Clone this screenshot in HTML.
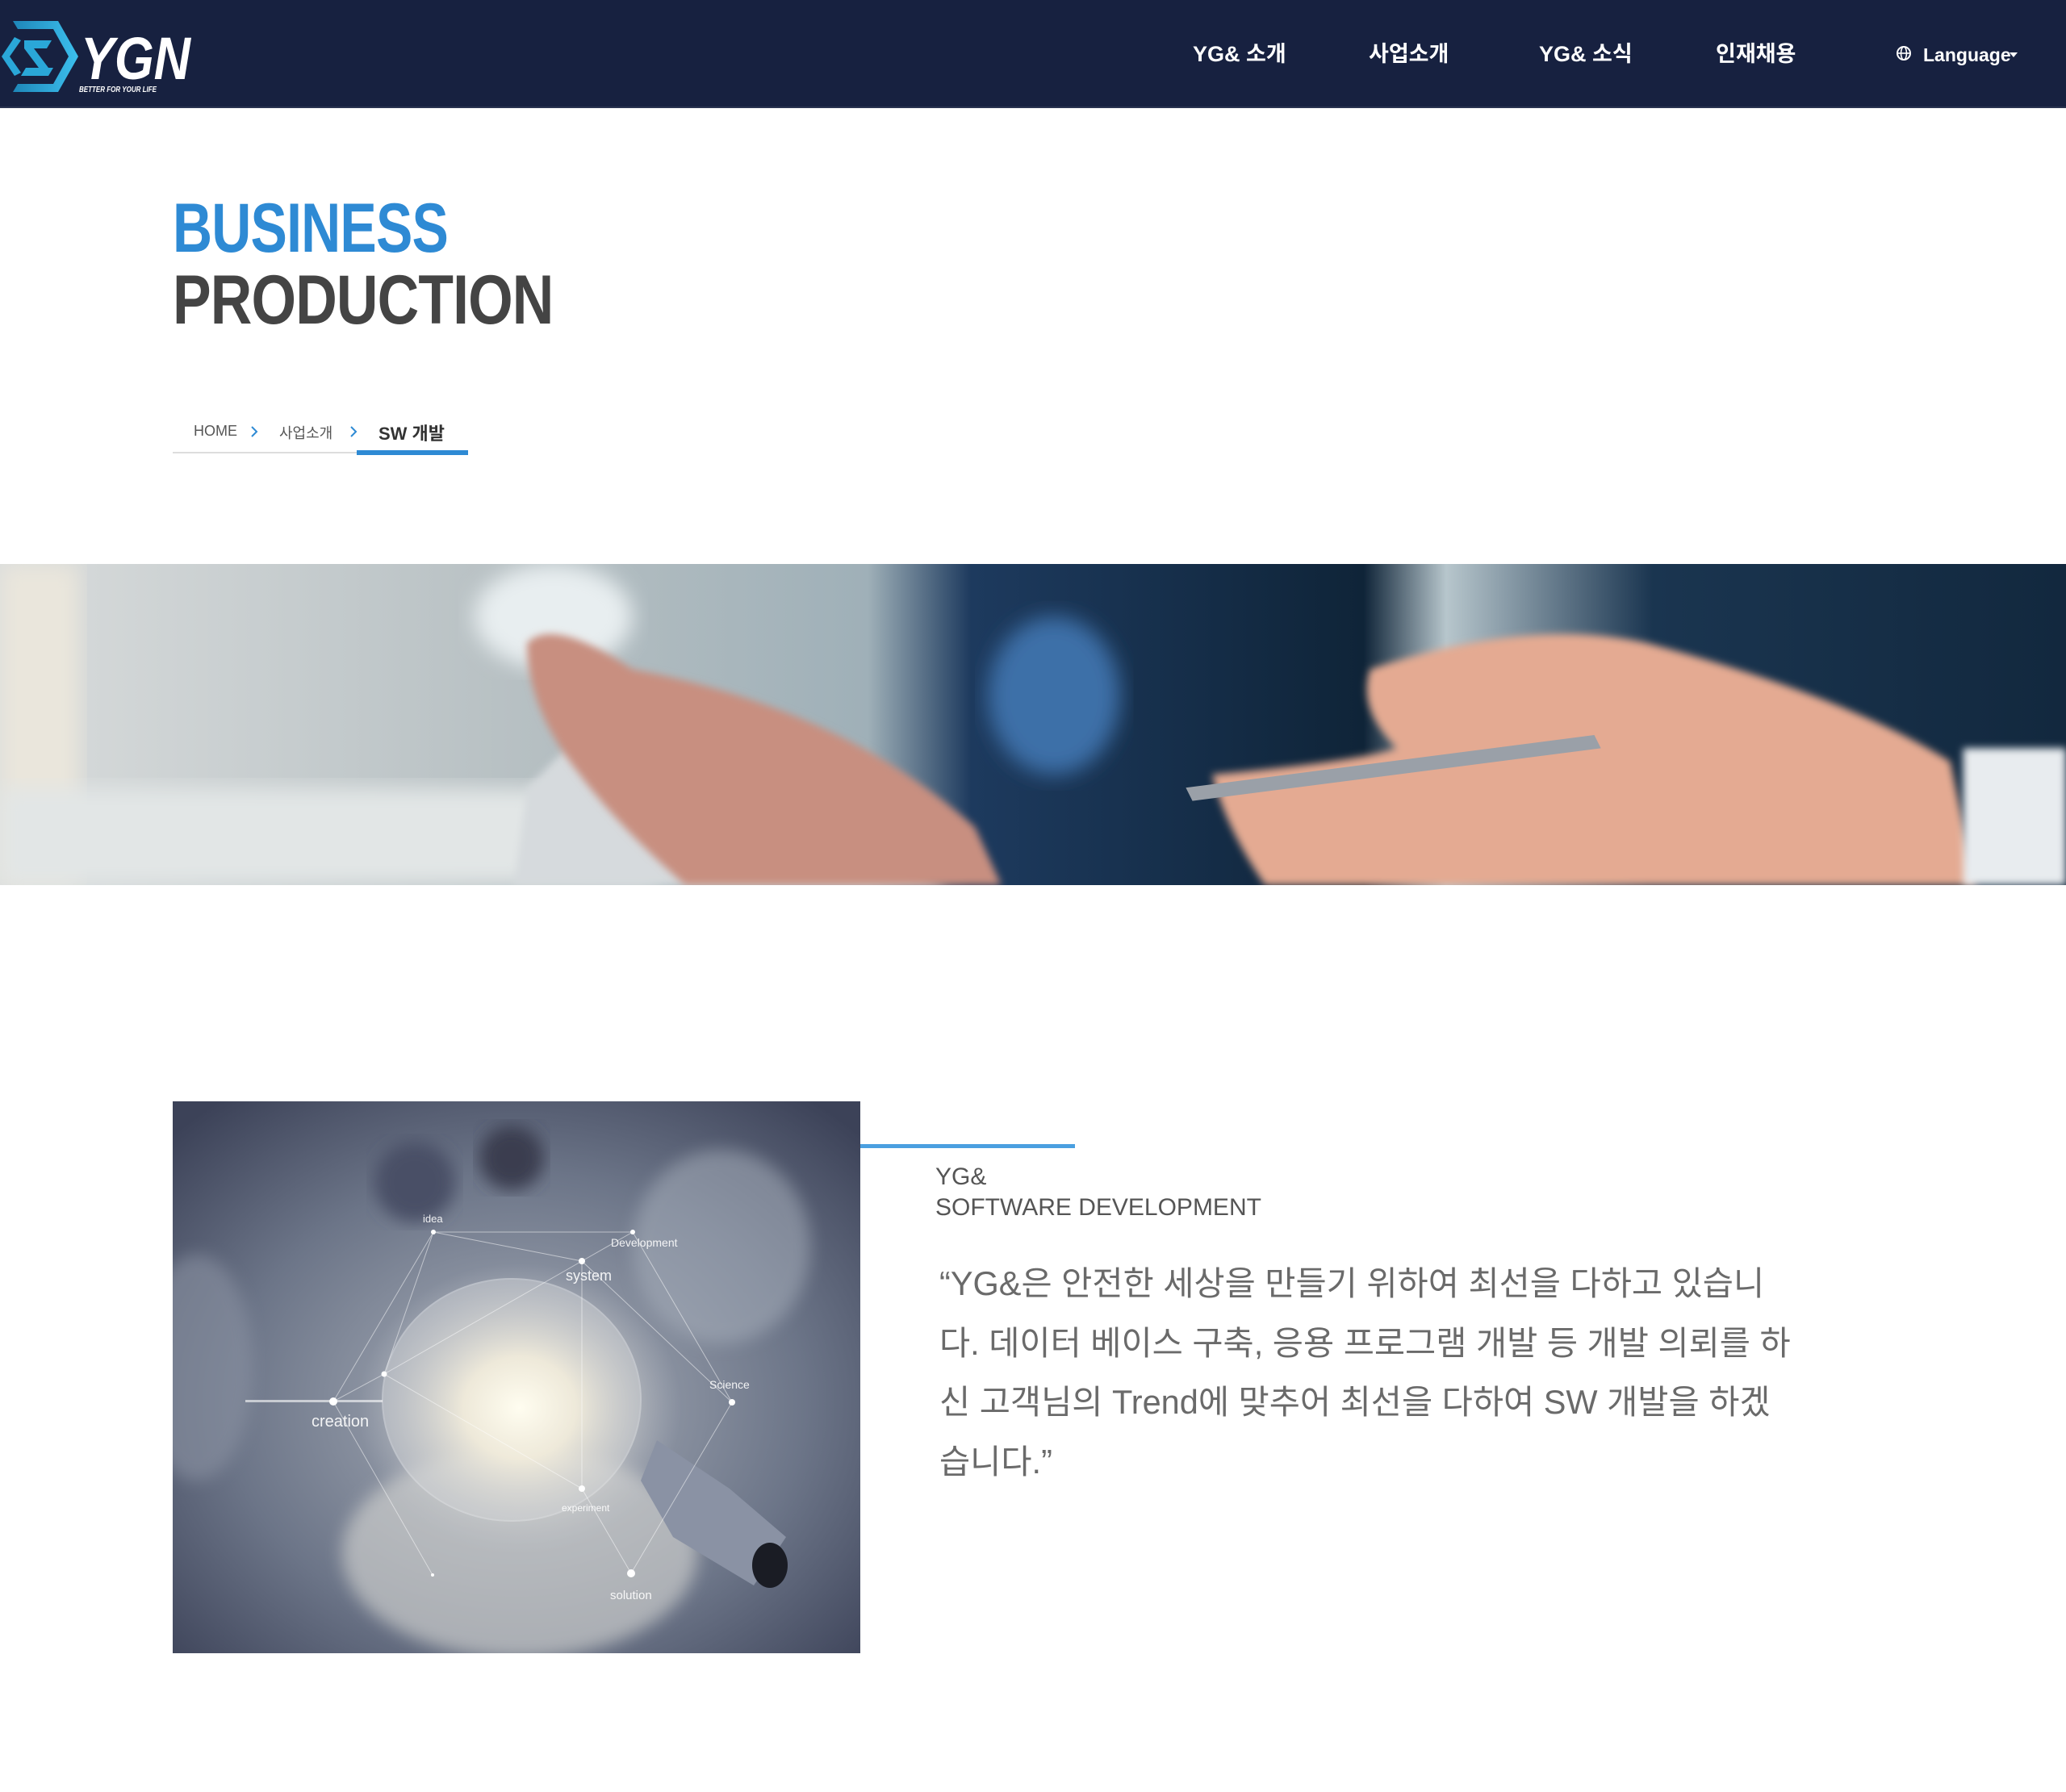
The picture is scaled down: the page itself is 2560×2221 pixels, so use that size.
<!DOCTYPE html>
<html><head><meta charset="utf-8"><style>
*{margin:0;padding:0;box-sizing:border-box}
body{width:2560px;height:2221px;background:#fff;position:relative;overflow:hidden;font-family:"Liberation Sans","Noto Sans CJK KR",sans-serif}
.hdr{position:absolute;left:0;top:0;width:2560px;height:134px;background:#172140;border-bottom:2px solid #2a3450}
.nav{position:absolute;top:50px;color:#fff;font-size:27px;font-weight:bold;white-space:nowrap;line-height:34px}
.abs{position:absolute;white-space:nowrap}
.big{position:absolute;left:214px;font-size:86px;font-weight:bold;transform-origin:left;letter-spacing:-1px;line-height:1}
</style></head><body>
<div class="hdr">
<svg style="position:absolute;left:0;top:20px" width="245" height="100" viewBox="0 0 245 100">
<defs><linearGradient id="lg" x1="0" x2="1"><stop offset="0" stop-color="#1e86b8"/><stop offset="1" stop-color="#3cc0ee"/></linearGradient></defs>
<path d="M16 6 L72 6 L97 50 L72 94 L16 94 L22 84 L66 84 L85 50 L66 16 L22 16 Z" fill="url(#lg)"/>
<path d="M18 26 L2 50 L18 74 L26 70 L12 50 L26 30 Z" fill="#2aa7d8"/>
<path d="M30 30 L64 30 L58 40 L42 40 L60 64 L66 64 L60 74 L26 74 L32 64 L48 64 L30 40 Z" fill="#2aa7d8"/>
<text x="100" y="78" font-family="Liberation Sans" font-weight="bold" font-style="italic" font-size="74" fill="#fff" textLength="136" lengthAdjust="spacingAndGlyphs">YGN</text>
<text x="98" y="94" font-family="Liberation Sans" font-weight="bold" font-style="italic" font-size="10" fill="#fff" textLength="96" lengthAdjust="spacingAndGlyphs">BETTER FOR YOUR LIFE</text>
</svg>
<div class="nav" style="left:1478px">YG&amp; 소개</div>
<div class="nav" style="left:1696px">사업소개</div>
<div class="nav" style="left:1907px">YG&amp; 소식</div>
<div class="nav" style="left:2126px">인재채용</div>
<svg style="position:absolute;left:2349px;top:56px" width="20" height="20" viewBox="0 0 20 20"><circle cx="10" cy="10" r="8" fill="none" stroke="#fff" stroke-width="2"/><ellipse cx="10" cy="10" rx="3.5" ry="8" fill="none" stroke="#fff" stroke-width="1.6"/><line x1="2" y1="10" x2="18" y2="10" stroke="#fff" stroke-width="1.6"/></svg>
<div class="nav" style="left:2383px;font-size:23px;top:51px">Language</div>
<div style="position:absolute;left:2490px;top:65px;border-left:5px solid transparent;border-right:5px solid transparent;border-top:6px solid #fff"></div>
</div>

<div class="big" style="top:240px;color:#2e8ad4;transform:scaleX(0.79)">BUSINESS</div>
<div class="big" style="top:329px;color:#444;transform:scaleX(0.83)">PRODUCTION</div>

<div class="abs" style="left:240px;top:524px;font-size:18px;color:#555">HOME</div>
<svg style="position:absolute;left:310px;top:527px" width="10" height="16" viewBox="0 0 10 16"><path d="M2 2 L8 8 L2 14" fill="none" stroke="#2e8ad4" stroke-width="2"/></svg>
<div class="abs" style="left:346px;top:523px;font-size:18px;color:#555">사업소개</div>
<svg style="position:absolute;left:433px;top:527px" width="10" height="16" viewBox="0 0 10 16"><path d="M2 2 L8 8 L2 14" fill="none" stroke="#2e8ad4" stroke-width="2"/></svg>
<div class="abs" style="left:469px;top:520px;font-size:22px;color:#333;font-weight:bold">SW 개발</div>
<div class="abs" style="left:214px;top:560px;width:228px;height:2px;background:#ddd"></div>
<div class="abs" style="left:442px;top:558px;width:138px;height:6px;background:#2e8ad4"></div>

<svg style="position:absolute;left:0;top:699px" width="2560" height="398" viewBox="0 0 1568 244" preserveAspectRatio="none">
<defs>
<linearGradient id="bg" x1="0" x2="1"><stop offset="0" stop-color="#d9dcdc"/><stop offset="0.25" stop-color="#b7c0c3"/><stop offset="0.42" stop-color="#9fb0b8"/><stop offset="0.47" stop-color="#1d3a5e"/><stop offset="0.66" stop-color="#0f2438"/><stop offset="0.7" stop-color="#b7c6cc"/><stop offset="0.8" stop-color="#1a3550"/><stop offset="1" stop-color="#12283e"/></linearGradient>
<filter id="bl"><feGaussianBlur stdDeviation="8"/></filter>
<filter id="bl2"><feGaussianBlur stdDeviation="3"/></filter>
</defs>
<rect width="1568" height="244" fill="url(#bg)"/>
<rect x="0" y="0" width="60" height="244" fill="#eae6dc" filter="url(#bl)"/>
<rect x="0" y="170" width="500" height="74" fill="#e2e6e6" filter="url(#bl)"/>
<ellipse cx="420" cy="40" rx="60" ry="40" fill="#e8eef0" filter="url(#bl)"/>
<ellipse cx="800" cy="100" rx="50" ry="60" fill="#3d6fa8" filter="url(#bl)"/>
<path d="M400 170 L430 140 L720 244 L390 244 Z" fill="#d6dadd" filter="url(#bl2)"/>
<path d="M400 60 Q420 40 480 80 Q640 110 740 200 L760 244 L520 244 Q470 200 440 160 Q400 110 400 60 Z" fill="#c88f80" filter="url(#bl2)"/>
<path d="M1040 80 Q1160 40 1250 60 Q1400 100 1480 150 L1500 244 L960 244 Q930 200 920 160 Q1030 150 1060 140 Q1030 110 1040 80 Z" fill="#e4aa92" filter="url(#bl2)"/>
<path d="M900 170 L1210 130 L1215 140 L905 180 Z" fill="#9aa0a8"/>
<rect x="1490" y="140" width="78" height="104" fill="#e8ecef" filter="url(#bl2)"/>
</svg>

<svg style="position:absolute;left:214px;top:1365px" width="852" height="684" viewBox="0 0 852 684">
<defs>
<radialGradient id="g1" cx="0.5" cy="0.55" r="0.7"><stop offset="0" stop-color="#aab0ba"/><stop offset="0.6" stop-color="#6c7588"/><stop offset="1" stop-color="#3c4258"/></radialGradient>
<radialGradient id="gl" cx="0.5" cy="0.5" r="0.5"><stop offset="0" stop-color="#fffdf0"/><stop offset="0.35" stop-color="#f4eedc" stop-opacity="0.9"/><stop offset="1" stop-color="#c0c4cc" stop-opacity="0"/></radialGradient>
<filter id="b3"><feGaussianBlur stdDeviation="10"/></filter>
</defs>
<rect width="852" height="684" fill="url(#g1)"/>
<ellipse cx="430" cy="560" rx="220" ry="130" fill="#d8d8d4" opacity="0.6" filter="url(#b3)"/>
<ellipse cx="680" cy="180" rx="110" ry="120" fill="#aab2be" opacity="0.5" filter="url(#b3)"/>
<ellipse cx="30" cy="330" rx="70" ry="140" fill="#8a92a2" opacity="0.6" filter="url(#b3)"/>
<ellipse cx="300" cy="100" rx="50" ry="50" fill="#4a5066" filter="url(#b3)"/>
<ellipse cx="420" cy="70" rx="40" ry="40" fill="#3a3e50" filter="url(#b3)"/>
<ellipse cx="420" cy="370" rx="160" ry="150" fill="#cfd2d6" opacity="0.5" stroke="#e8eaee" stroke-width="2"/>
<ellipse cx="430" cy="380" rx="200" ry="180" fill="url(#gl)"/>
<path d="M600 420 L690 480 L760 540 L720 600 L620 540 L580 470 Z" fill="#8a92a4"/>
<ellipse cx="740" cy="575" rx="22" ry="28" fill="#1a1c24"/>
<g stroke="#fff" stroke-opacity="0.5" stroke-width="1" fill="none">
<path d="M323 162 L570 162 L693 373 L568 585 L507 480 L262 338 L323 162 L507 198 L693 373 M323 162 L199 372 L262 338 L507 198 L570 162 M507 198 L507 480 M199 372 L322 587"/>
</g>
<g fill="#fff">
<circle cx="323" cy="162" r="3"/><circle cx="570" cy="162" r="3"/><circle cx="507" cy="198" r="4"/><circle cx="262" cy="338" r="3.5"/><circle cx="199" cy="372" r="5"/><circle cx="693" cy="373" r="4"/><circle cx="507" cy="480" r="4"/><circle cx="568" cy="585" r="5"/><circle cx="322" cy="587" r="2"/>
</g>
<rect x="90" y="370" width="170" height="3" fill="#fff" opacity="0.6"/>
<g fill="#fff" font-family="Liberation Sans" opacity="0.9">
<text x="310" y="150" font-size="13">idea</text>
<text x="543" y="180" font-size="14">Development</text>
<text x="487" y="222" font-size="18">system</text>
<text x="172" y="403" font-size="20">creation</text>
<text x="665" y="356" font-size="14">Science</text>
<text x="482" y="508" font-size="12">experiment</text>
<text x="542" y="617" font-size="15">solution</text>
</g>
</svg>

<div class="abs" style="left:1066px;top:1418px;width:266px;height:5px;background:#4a9fe0"></div>
<div class="abs" style="left:1159px;top:1440px;font-size:30px;color:#555;line-height:38px;font-weight:300">YG&amp;<br>SOFTWARE DEVELOPMENT</div>
<div class="abs" style="left:1164px;top:1554px;font-size:41.5px;color:#6a6a6a;line-height:73.5px">“YG&amp;은 안전한 세상을 만들기 위하여 최선을 다하고 있습니<br>다. 데이터 베이스 구축, 응용 프로그램 개발 등 개발 의뢰를 하<br>신 고객님의 Trend에 맞추어 최선을 다하여 SW 개발을 하겠<br>습니다.”</div>
</body></html>
